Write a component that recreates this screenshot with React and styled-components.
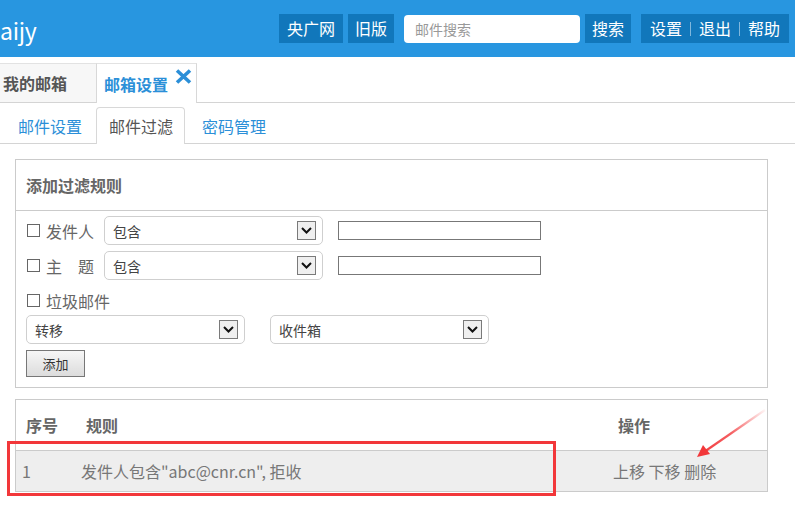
import React from "react";
import styled, { createGlobalStyle } from "styled-components";

const GlobalStyle = createGlobalStyle`
    html, body {
        margin: 0;
        padding: 0;
        background: #fff;
    }
    body {
        font-family: "Noto Sans CJK SC", "Noto Sans", sans-serif;
        color: #666;
    }
`;

const Page = styled.div`
    position: relative;
    width: 795px;
    height: 513px;
    overflow: hidden;
`;

const Header = styled.div`
    height: 57px;
    background: #2896e0;
    display: flex;
    align-items: center;
    padding-right: 6px;
`;

const Logo = styled.div`
    color: #fff;
    font-size: 23px;
    line-height: 1;
    margin-top: 3px;
    margin-left: 0;
    letter-spacing: -0.3px;
`;

const Tools = styled.div`
    margin-left: auto;
    display: flex;
    align-items: center;
`;

const HeadButton = styled.div`
    height: 29px;
    line-height: 29px;
    padding: 0 ${p => p.pad || 7}px;
    margin-left: ${p => p.gap || 0}px;
    background: #1177bb;
    color: #fff;
    font-size: 16px;
    display: flex;
    align-items: center;
`;

const Sep = styled.span`
    display: inline-block;
    width: 1px;
    height: 14px;
    background: #7fb7dd;
    margin: 0 8px;
`;

const Search = styled.div`
    width: 176px;
    height: 28px;
    margin-left: 10px;
    margin-right: 5px;
    background: #fff;
    border-radius: 4px;
    box-sizing: border-box;
    padding-left: 11px;
    font-size: 14px;
    line-height: 28px;
    color: #999;
`;

const TabBar = styled.div`
    margin-top: 6px;
    height: 39px;
    display: flex;
    border-bottom: 1px solid #d4d4d4;
`;

const TopTab = styled.div`
    box-sizing: border-box;
    display: flex;
    align-items: center;
    font-size: 16px;
    font-weight: bold;
    border-top: 1px solid #e2e2e2;
    background: ${p => (p.active ? "#fff" : "#f7f7f7")};
    color: ${p => (p.active ? "#2b8fd8" : "#555")};
    border-left: ${p => (p.active ? "1px solid #d8d8d8" : "none")};
    border-right: ${p => (p.active ? "1px solid #d8d8d8" : "none")};
    height: ${p => (p.active ? "40px" : "39px")};
    width: ${p => p.w}px;
    padding-left: ${p => p.pl}px;
`;

const CloseIcon = styled.svg`
    align-self: flex-start;
    margin-top: 5px;
    margin-left: 7px;
`;

const SubBar = styled.div`
    height: 36px;
    padding-top: 4px;
    display: flex;
    border-bottom: 1px solid #d4d4d4;
    padding-left: 5px;
`;

const SubTab = styled.div`
    height: ${p => (p.active ? "37px" : "36px")};
    box-sizing: border-box;
    padding: 0 11px 0 12px;
    margin-right: ${p => (p.active ? 4 : 2)}px;
    display: flex;
    align-items: center;
    font-size: 16px;
    color: ${p => (p.active ? "#555" : "#2b8fd8")};
    background: #fff;
    border: 1px solid ${p => (p.active ? "#d8d8d8" : "transparent")};
    border-bottom: none;
    border-radius: 4px 4px 0 0;
`;

const Content = styled.div`
    padding: 15px 27px 0 15px;
`;

const Panel = styled.div`
    border: 1px solid #cbcbcb;
`;

const PanelHead = styled.div`
    height: 50px;
    border-bottom: 1px solid #cbcbcb;
    display: flex;
    align-items: center;
    padding-left: 10px;
    font-size: 16px;
    font-weight: bold;
    color: #666;
`;

const PanelBody = styled.div`
    padding: 5px 10px 10px 10px;
    display: flex;
    flex-direction: column;
`;

const FormRow = styled.div`
    display: flex;
    align-items: center;
    height: 29px;
    margin-bottom: ${p => p.mb || 0}px;
    margin-top: ${p => p.mt || 0}px;
`;

const Check = styled.label`
    display: flex;
    align-items: center;
    flex-shrink: 0;
    min-width: 78px;
    font-size: 16px;
    color: #666;
    white-space: pre;
`;

const Box = styled.span`
    flex-shrink: 0;
    width: 13px;
    height: 13px;
    border: 1px solid #666;
    box-sizing: border-box;
    margin: 0 6px 0 1px;
    background: #fff;
`;

const Select = styled.div`
    width: 219px;
    height: 29px;
    box-sizing: border-box;
    border: 1px solid #cfcfcf;
    border-radius: 5px;
    display: flex;
    align-items: center;
    padding: 0 6px 0 8px;
    font-size: 14px;
    color: #444;
    margin-right: ${p => p.mr || 0}px;
`;

const Arrow = styled.span`
    margin-left: auto;
    width: 19px;
    height: 19px;
    box-sizing: border-box;
    border: 1px solid #7a7a7a;
    background: #efefef;
    display: flex;
    align-items: center;
    justify-content: center;
`;

const TextInput = styled.div`
    width: 203px;
    height: 19px;
    box-sizing: border-box;
    border: 1px solid #777;
    margin-left: 15px;
    background: #fff;
`;

const AddButton = styled.div`
    width: 59px;
    height: 27px;
    box-sizing: border-box;
    border: 1px solid #777;
    background: linear-gradient(#f6f6f6, #dcdcdc);
    font-size: 13px;
    color: #333;
    display: flex;
    align-items: center;
    justify-content: center;
    margin-top: 6px;
`;

const Table = styled.div`
    border: 1px solid #cbcbcb;
    margin-top: 11px;
`;

const Row = styled.div`
    display: grid;
    grid-template-columns: 60px 532px 1fr;
    align-items: center;
    height: ${p => (p.head ? 50 : 40)}px;
    background: ${p => (p.head ? "#fff" : "#eee")};
    border-top: ${p => (p.head ? "none" : "1px solid #cbcbcb")};
    font-size: 16px;
    font-weight: ${p => (p.head ? "bold" : "normal")};
    color: ${p => (p.head ? "#666" : "#777")};
`;

const Cell = styled.div`
    padding-left: ${p => p.pl}px;
    white-space: nowrap;
`;

const Highlight = styled.div`
    position: absolute;
    left: 7px;
    top: 441px;
    width: 549px;
    height: 55px;
    box-sizing: border-box;
    border: 3px solid #f2373a;
    pointer-events: none;
`;

const Pointer = styled.svg`
    position: absolute;
    left: 690px;
    top: 404px;
    pointer-events: none;
`;

const Chevron = () => (
    <svg width="11" height="7" viewBox="0 0 11 7">
        <path d="M1 1 L5.5 5.5 L10 1" fill="none" stroke="#111" strokeWidth="2" />
    </svg>
);

const FakeSelect = ({ label, mr }) => (
    <Select mr={mr}>
        {label}
        <Arrow>
            <Chevron />
        </Arrow>
    </Select>
);

const App = () => {
    return (
        <Page>
            <GlobalStyle />
            <Header>
                <Logo>aijy</Logo>
                <Tools>
                    <HeadButton pad={8}>央广网</HeadButton>
                    <HeadButton gap={5}>旧版</HeadButton>
                    <Search>邮件搜索</Search>
                    <HeadButton>搜索</HeadButton>
                    <HeadButton gap={10} pad={9}>
                        设置<Sep />退出<Sep />帮助
                    </HeadButton>
                </Tools>
            </Header>

            <TabBar>
                <TopTab w={96} pl={3}>我的邮箱</TopTab>
                <TopTab active w={101} pl={7}>
                    邮箱设置
                    <CloseIcon width="17" height="15" viewBox="0 0 17 15">
                        <path d="M2 1.5 L15 13.5 M15 1.5 L2 13.5" stroke="#2b8fd8" strokeWidth="3.6" />
                    </CloseIcon>
                </TopTab>
            </TabBar>

            <SubBar>
                <SubTab>邮件设置</SubTab>
                <SubTab active>邮件过滤</SubTab>
                <SubTab>密码管理</SubTab>
            </SubBar>

            <Content>
                <Panel>
                    <PanelHead>添加过滤规则</PanelHead>
                    <PanelBody>
                        <FormRow mb={6}>
                            <Check><Box />发件人</Check>
                            <FakeSelect label="包含" />
                            <TextInput />
                        </FormRow>
                        <FormRow>
                            <Check><Box />{"主　题"}</Check>
                            <FakeSelect label="包含" />
                            <TextInput />
                        </FormRow>
                        <FormRow mt={6}>
                            <Check><Box />垃圾邮件</Check>
                        </FormRow>
                        <FormRow>
                            <FakeSelect label="转移" mr={25} />
                            <FakeSelect label="收件箱" />
                        </FormRow>
                        <AddButton>添加</AddButton>
                    </PanelBody>
                </Panel>

                <Table>
                    <Row head>
                        <Cell pl={10}>序号</Cell>
                        <Cell pl={10}>规则</Cell>
                        <Cell pl={10}>操作</Cell>
                    </Row>
                    <Row>
                        <Cell pl={6}>1</Cell>
                        <Cell pl={5}>发件人包含"abc@cnr.cn", 拒收</Cell>
                        <Cell pl={5}>上移 下移 删除</Cell>
                    </Row>
                </Table>
            </Content>

            <Highlight />
            <Pointer width="80" height="60" viewBox="0 0 80 60">
                <defs>
                    <linearGradient id="fade" x1="75" y1="6" x2="7" y2="53" gradientUnits="userSpaceOnUse">
                        <stop offset="0" stopColor="#f2373a" stopOpacity="0.05" />
                        <stop offset="0.5" stopColor="#f2373a" stopOpacity="0.8" />
                        <stop offset="1" stopColor="#f2373a" />
                    </linearGradient>
                </defs>
                <path d="M75 6 L14 48" stroke="url(#fade)" strokeWidth="2.2" />
                <path d="M7 53 L13 41 L20 50 Z" fill="#f2373a" />
            </Pointer>
        </Page>
    );
};

export default App;
